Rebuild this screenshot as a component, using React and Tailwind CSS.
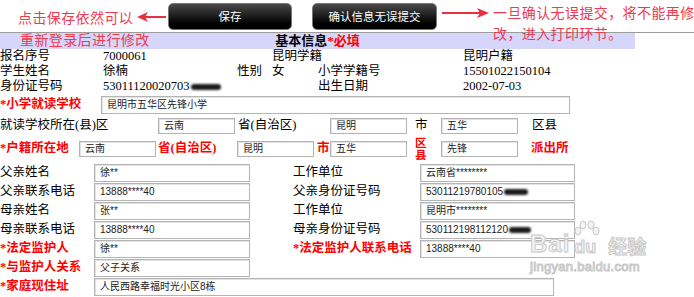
import React from "react";

const RED = "text-[#ff0000]";

// 灰框输入框（只读展示）
const Box = ({ w, h = "h-[18px]", children }) => (
  <div
    className={`${w} ${h} shrink-0 border border-[#b4b4b4] bg-white pl-[5px] flex items-center text-[10px] text-[#222] font-['Liberation_Sans','Noto_Sans_CJK_SC',sans-serif] whitespace-nowrap overflow-hidden shadow-[inset_1px_1px_0_#e2e2e2]`}
  >
    {children}
  </div>
);

const Blob = ({ w = "w-[28px]" }) => (
  <span className={`inline-block ${w} h-[6px] rounded-full bg-[#1c1c1c] blur-[1.2px] ml-[1px]`} />
);

const Label = ({ w, red, children }) => (
  <div
    className={`${w} shrink-0 whitespace-nowrap ${
      red ? `${RED} font-bold` : "text-black"
    }`}
  >
    {children}
  </div>
);

const ArrowLeft = () => (
  <svg width="31" height="10" viewBox="0 0 31 10" className="mt-[12px] shrink-0">
    <line x1="7" y1="5" x2="29" y2="5" stroke="#e8303f" strokeWidth="2" />
    <polygon points="0,5 11,0 8,5 11,10" fill="#e8303f" />
  </svg>
);

const ArrowRight = () => (
  <svg width="47" height="10" viewBox="0 0 47 10" className="mt-[8px] ml-[5px] shrink-0">
    <line x1="0" y1="5" x2="38" y2="5" stroke="#e8303f" strokeWidth="2" />
    <polygon points="47,5 35,0 38,5 35,10" fill="#e8303f" />
  </svg>
);

const DarkButton = ({ children, className = "" }) => (
  <button
    className={`${className} h-[27px] mt-[3px] shrink-0 rounded-[5px] border border-[#777] bg-linear-to-b from-[#4a4a4a] via-[#1b1b1b] to-[#000] text-white text-[11.5px] flex items-center justify-center font-['Noto_Sans_CJK_SC',sans-serif]`}
  >
    {children}
  </button>
);

const parents = [
  { l: "父亲姓名", v: "徐**", rl: "工作单位", rv: "云南省********" },
  { l: "父亲联系电话", v: "13888****40", rl: "父亲身份证号码", rv: <>53011219780105<Blob w="w-[24px]" /></> },
  { l: "母亲姓名", v: "张**", rl: "工作单位", rv: "昆明市********" },
  { l: "母亲联系电话", v: "13888****40", rl: "母亲身份证号码", rv: <>530112198112120<Blob w="w-[22px]" /></> },
  { l: "*法定监护人", red: true, v: "徐**", rl: "*法定监护人联系电话", rred: true, rv: "13888****40" },
  { l: "*与监护人关系", red: true, v: "父子关系" },
];

export default function App() {
  return (
    <div className="relative w-[694px] h-[297px] overflow-hidden bg-white text-[12.5px] font-['Liberation_Serif','Noto_Sans_CJK_SC',serif]">
      {/* 顶部按钮与提示 */}
      <div className="flex h-[32px] items-start">
        <div className="relative z-10 ml-[18px] w-[119px] shrink-0 pt-[6px] text-[14px] leading-[22px] tracking-[0.4px] text-[#ee3a4f] whitespace-nowrap font-['Noto_Sans_CJK_SC',sans-serif]">
          点击保存依然可以
          <br />
          <span className="ml-[2px]">重新登录后进行修改</span>
        </div>
        <ArrowLeft />
        <DarkButton className="w-[124px]">保存</DarkButton>
        <DarkButton className="w-[125px] ml-[20px]">确认信息无误提交</DarkButton>
        <ArrowRight />
        <div className="relative z-10 ml-[4px] pt-[2px] text-[14px] leading-[21px] tracking-[0.4px] text-[#ee3a4f] whitespace-nowrap font-['Noto_Sans_CJK_SC',sans-serif]">
          一旦确认无误提交，将不能再修
          <br />
          改，进入打印环节。
        </div>
      </div>

      {/* 基本信息标题 */}
      <div className="border-t border-[#9c9c9c]">
        <div className="w-[635px] h-[16px] bg-[#d6d6fb] text-center leading-[16px] font-bold text-[13px]">
          基本信息<span className={RED}>*必填</span>
        </div>
      </div>

      {/* 基本资料 */}
      <div className="leading-[15px]">
        <div className="flex h-[15px]">
          <Label w="w-[103px]">报名序号</Label>
          <Label w="w-[169px]">7000061</Label>
          <Label w="w-[191px]">昆明学籍</Label>
          <Label w="w-[100px]">昆明户籍</Label>
        </div>
        <div className="flex h-[15px]">
          <Label w="w-[103px]">学生姓名</Label>
          <Label w="w-[134px]">徐楠</Label>
          <Label w="w-[35px]">性别</Label>
          <Label w="w-[46px]">女</Label>
          <Label w="w-[145px]">小学学籍号</Label>
          <Label w="w-[100px]">15501022150104</Label>
        </div>
        <div className="flex h-[15px]">
          <Label w="w-[103px]">身份证号码</Label>
          <Label w="w-[215px]">
            53011120020703<Blob w="w-[30px]" />
          </Label>
          <Label w="w-[145px]">出生日期</Label>
          <Label w="w-[100px]">2002-07-03</Label>
        </div>
      </div>

      {/* 就读学校 */}
      <div className="flex items-center h-[19px] mt-[1px]">
        <Label w="w-[101px]" red>*小学就读学校</Label>
        <Box w="w-[469px]">昆明市五华区先锋小学</Box>
      </div>

      <div className="flex items-center h-[23px]">
        <Label w="w-[158px]">就读学校所在(县)区</Label>
        <Box w="w-[77px]" h="h-[16px]">云南</Box>
        <Label w="w-[95px]">
          <span className="ml-[3px]">省(自治区)</span>
        </Label>
        <Box w="w-[77px]" h="h-[16px]">昆明</Box>
        <Label w="w-[34px]">
          <span className="ml-[8px]">市</span>
        </Label>
        <Box w="w-[77px]" h="h-[16px]">五华</Box>
        <Label w="w-[60px]">
          <span className="ml-[14px]">区县</span>
        </Label>
      </div>

      <div className="flex items-center h-[23px]">
        <Label w="w-[79px]" red>*户籍所在地</Label>
        <Box w="w-[77px]" h="h-[16px]">云南</Box>
        <Label w="w-[81px]" red>
          <span className="ml-[2px]">省(自治区)</span>
        </Label>
        <Box w="w-[77px]" h="h-[16px]">昆明</Box>
        <Label w="w-[16px]" red>
          <span className="ml-[3px]">市</span>
        </Label>
        <Box w="w-[77px]" h="h-[16px]">五华</Box>
        <div className={`w-[34px] shrink-0 pl-[8px] ${RED} font-bold leading-[12px] text-[11.5px]`}>
          <div className="h-[12px]">区</div>
          <div className="h-[12px]">县</div>
        </div>
        <Box w="w-[77px]" h="h-[16px]">先锋</Box>
        <Label w="w-[60px]" red>
          <span className="ml-[13px]">派出所</span>
        </Label>
      </div>

      {/* 家长信息 */}
      <div className="mt-[3px]">
        {parents.map((p, i) => (
          <div key={i} className="flex items-center h-[19px]">
            <Label w="w-[94px]" red={p.red}>{p.l}</Label>
            <Box w="w-[156px]">{p.v}</Box>
            {p.rl && (
              <>
                <Label w="w-[126px]" red={p.rred}>
                  <span className="ml-[43px]">{p.rl}</span>
                </Label>
                <div className="ml-[44px]" />
                <Box w="w-[155px]">{p.rv}</Box>
              </>
            )}
          </div>
        ))}
        <div className="flex items-center h-[19px]">
          <Label w="w-[94px]" red>*家庭现住址</Label>
          <Box w="w-[460px]">人民西路幸福时光小区8栋</Box>
        </div>
      </div>

      {/* 百度经验水印 */}
      <div className="absolute left-[530px] top-[220px] pointer-events-none select-none text-[#f3f3f3] [-webkit-text-stroke:1px_#c9c9c9] font-['Liberation_Sans',sans-serif]">
        <div className="flex items-end">
          <span className="text-[24px] font-bold leading-[24px] tracking-[1px]">Bai</span>
          <span className="relative ml-[2px] w-[30px] h-[36px]">
            <svg width="30" height="22" viewBox="0 0 30 22" className="absolute left-0 top-0">
              <g fill="#f3f3f3" stroke="#c9c9c9" strokeWidth="1">
                <ellipse cx="6" cy="11" rx="3" ry="4" />
                <ellipse cx="11" cy="5" rx="3" ry="4" />
                <ellipse cx="19" cy="5" rx="3" ry="4" />
                <ellipse cx="24" cy="11" rx="3" ry="4" />
              </g>
            </svg>
            <span className="absolute left-[2px] bottom-0 text-[18px] font-bold leading-[18px]">du</span>
          </span>
          <span className="ml-[6px] text-[19px] font-bold leading-[20px] font-['Noto_Sans_CJK_SC',sans-serif]">经验</span>
        </div>
        <div className="mt-[4px] text-[13px] leading-[14px] tracking-[0.3px]">jingyan.baidu.com</div>
      </div>
    </div>
  );
}
